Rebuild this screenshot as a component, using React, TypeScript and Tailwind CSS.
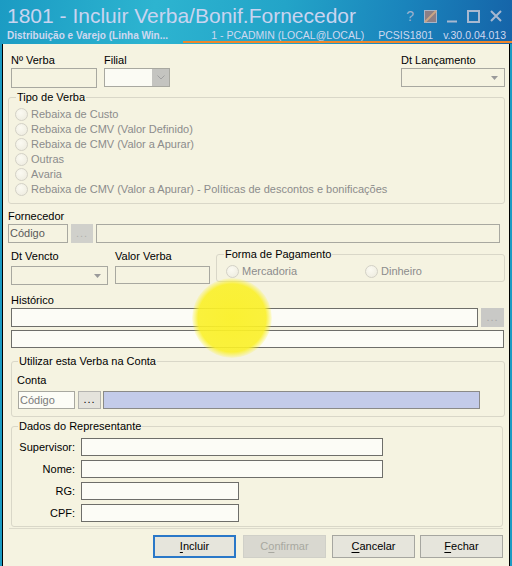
import React from "react";

const Lbl = ({ children, className = "" }: { children: React.ReactNode; className?: string }) => (
  <div className={`h-[13px] leading-[13px] whitespace-nowrap ${className}`}>{children}</div>
);

const Radio = ({ label, className = "" }: { label: string; className?: string }) => (
  <div className={`flex h-[15px] items-center ${className}`}>
    <span className="h-[13px] w-[13px] rounded-full border border-[#d3d1c6] bg-[radial-gradient(circle_at_40%_35%,#fbfaf2,#ecEadd)]" />
    <span className="ml-[3px] leading-[13px] text-[#8c8c8c] whitespace-nowrap">{label}</span>
  </div>
);

const Arrow = ({ color = "#9a9a9a" }: { color?: string }) => (
  <svg width="7" height="4" viewBox="0 0 7 4">
    <path d="M0 0h7L3.5 4z" fill={color} />
  </svg>
);

const Dots = ({ color }: { color: string }) => (
  <span className={`text-[11px] leading-none tracking-[1px] ${color}`}>...</span>
);

const Group = ({
  title,
  className = "",
  children,
}: {
  title: string;
  className?: string;
  children: React.ReactNode;
}) => (
  <fieldset className={`rounded-[3px] border border-[#d9d7c8] ${className}`}>
    <legend className="ml-[1px] px-[1px] leading-[13px] whitespace-nowrap">{title}</legend>
    {children}
  </fieldset>
);

const Btn = ({
  mn,
  rest,
  pre = "",
  className = "",
  disabled = false,
}: {
  mn: string;
  rest: string;
  pre?: string;
  className?: string;
  disabled?: boolean;
}) => (
  <div
    className={`flex h-[23px] w-[83px] items-center justify-center ${
      disabled ? "border border-[#d0d0c8] bg-[#d9d8d0] text-[#a8a8a0]" : "border border-[#a6a6a0] bg-[#e6e5dc]"
    } ${className}`}
  >
    {pre}
    <span className="underline underline-offset-2">{mn}</span>
    {rest}
  </div>
);

function TitleBar() {
  return (
    <div className="h-[44px] shrink-0 bg-[linear-gradient(100deg,#1b9bc3_0%,#2db4d0_30%,#23a4c8_55%,#1a84bc_78%,#1563a8_100%)]">
      <div className="flex h-[30px] items-center">
        <div className="pl-[7px] pt-[2px] text-[21px] leading-[26px] text-[#c9d4f0] whitespace-nowrap">
          1801 - Incluir Verba/Bonif.Fornecedor
        </div>
        <div className="ml-auto mr-[10px] flex items-center gap-[10px] pt-[2px] text-[#9fb3cf]">
          <span className="text-[14px] leading-none">?</span>
          <svg width="13" height="13" viewBox="0 0 13 13">
            <rect x="0.5" y="0.5" width="12" height="12" fill="#8d7f86" stroke="#a8b4c8" />
            <path d="M1 12L12 1" stroke="#c9a585" strokeWidth="2" />
          </svg>
          <svg width="10" height="13" viewBox="0 0 10 13">
            <path d="M0 11.5h10" stroke="#a8b8d0" strokeWidth="2" />
          </svg>
          <svg width="13" height="13" viewBox="0 0 13 13">
            <rect x="1" y="1" width="11" height="11" fill="none" stroke="#a8b8d0" strokeWidth="2" />
          </svg>
          <svg width="12" height="12" viewBox="0 0 12 12">
            <path d="M1 1l10 10M11 1L1 11" stroke="#a8b8d0" strokeWidth="2" />
          </svg>
        </div>
      </div>
      <div className="flex h-[13px]">
        <div className="w-[190px] pl-[7px] text-[10px] font-bold leading-[11px] text-[#cfd8f0] whitespace-nowrap">
          Distribuição e Varejo (Linha Win...
        </div>
        <div className="flex flex-1 justify-end border-b-2 border-[#f0862a] pr-[6px] text-[10.5px] leading-[11px] text-[#cfd8f0] whitespace-nowrap">
          <span className="ml-[28px]">1 - PCADMIN (LOCAL@LOCAL)</span>
          <span className="ml-[14px]">PCSIS1801</span>
          <span className="ml-[10px]">v.30.0.04.013</span>
        </div>
      </div>
    </div>
  );
}

export default function App() {
  return (
    <div className="relative flex h-[566px] w-[512px] flex-col overflow-hidden bg-[#1b9bc3] font-['Liberation_Sans',Arial,sans-serif] text-[11px] text-black">
      <TitleBar />
      <div className="mx-[2px] flex flex-1 flex-col border-x border-black bg-[#f5f3e1]">
        {/* top row */}
        <div className="flex pt-[10px]">
          <div className="ml-[8px] w-[86px]">
            <Lbl>Nº Verba</Lbl>
            <div className="mt-[1px] h-[20px] border border-[#a8a8a0]" />
          </div>
          <div className="ml-[7px] w-[66px]">
            <Lbl>Filial</Lbl>
            <div className="mt-[1px] flex h-[19px] border border-[#a8a8a0] bg-[#fbfbf4]">
              <div className="flex-1" />
              <div className="flex w-[17px] items-center justify-center bg-[#c4c4c0]">
                <svg width="8" height="5" viewBox="0 0 8 5">
                  <path d="M0.5 0.5L4 4L7.5 0.5" fill="none" stroke="#a0a0a0" />
                </svg>
              </div>
            </div>
          </div>
          <div className="ml-auto mr-[4px] w-[104px]">
            <Lbl>Dt Lançamento</Lbl>
            <div className="mt-[1px] flex h-[19px] items-center justify-end border border-[#a8a8a0] pr-[6px]">
              <Arrow />
            </div>
          </div>
        </div>

        {/* Tipo de Verba */}
        <Group title="Tipo de Verba" className="ml-[5px] mr-[4px] mt-[3px] px-[6px] pb-[6px] pt-[3px]">
          <Radio label="Rebaixa de Custo" />
          <Radio label="Rebaixa de CMV (Valor Definido)" />
          <Radio label="Rebaixa de CMV (Valor a Apurar)" />
          <Radio label="Outras" />
          <Radio label="Avaria" />
          <Radio label="Rebaixa de CMV (Valor a Apurar) - Políticas de descontos e bonificações" />
        </Group>

        {/* Fornecedor */}
        <div className="ml-[5px] mt-[6px]">
          <Lbl>Fornecedor</Lbl>
          <div className="mt-[1px] flex h-[19px]">
            <div className="flex w-[60px] items-center border border-[#a8a8a0] pl-[1px] text-[#5a5a5a]">Código</div>
            <div className="ml-[3px] flex w-[22px] items-end justify-center bg-[#d0d0cb] pb-[4px]">
              <Dots color="text-[#b0b0ac]" />
            </div>
            <div className="ml-[3px] w-[404px] border border-[#a8a8a0]" />
          </div>
        </div>

        {/* Dt Vencto / Valor / Forma */}
        <div className="mt-[5px] flex items-start">
          <div className="ml-[8px] w-[97px] pt-[2px]">
            <Lbl>Dt Vencto</Lbl>
            <div className="mt-[3px] flex h-[19px] items-center justify-end border border-[#a8a8a0] pr-[6px]">
              <Arrow />
            </div>
          </div>
          <div className="ml-[7px] w-[95px] pt-[2px]">
            <Lbl>Valor Verba</Lbl>
            <div className="mt-[3px] h-[18px] border border-[#a8a8a0]" />
          </div>
          <Group title="Forma de Pagamento" className="ml-[6px] w-[289px] px-[6px] pb-[2px] pt-[3px]">
            <div className="flex">
              <Radio label="Mercadoria" className="ml-[3px] w-[139px]" />
              <Radio label="Dinheiro" />
            </div>
          </Group>
        </div>

        {/* Histórico */}
        <div className="ml-[8px] mt-[9px]">
          <Lbl>Histórico</Lbl>
          <div className="mt-[1px] flex h-[19px]">
            <div className="w-[467px] border border-[#6e6e6a] bg-[#fcfcf6]" />
            <div className="ml-[3px] flex w-[23px] items-end justify-center bg-[#c9c9c6] pb-[4px]">
              <Dots color="text-[#a6a6a4]" />
            </div>
          </div>
          <div className="mt-[3px] h-[18px] w-[493px] border border-[#6e6e6a] bg-[#fcfcf6]" />
        </div>

        {/* Conta */}
        <Group title="Utilizar esta Verba na Conta" className="ml-[8px] mr-[4px] mt-[7px] px-[5px] pb-[7px]">
          <Lbl className="mt-[6px]">Conta</Lbl>
          <div className="mt-[4px] flex h-[18px]">
            <div className="ml-[1px] flex w-[57px] items-center border border-[#a8a8a0] bg-[#fcfcf6] pl-[1px] text-[#7a7a7a]">
              Código
            </div>
            <div className="ml-[3px] flex w-[23px] items-end justify-center border border-[#b4b4b0] bg-[#e4e3dc] pb-[3px]">
              <Dots color="text-black" />
            </div>
            <div className="ml-[2px] w-[377px] border border-[#8a8a88] bg-[#c3cbe9]" />
          </div>
        </Group>

        {/* Representante */}
        <Group title="Dados do Representante" className="ml-[8px] mr-[6px] mt-[3px] px-[5px] pb-[4px] pt-[5px]">
          <div className="flex flex-col gap-[4px]">
            {[
              ["Supervisor:", "w-[302px]"],
              ["Nome:", "w-[302px]"],
              ["RG:", "w-[158px]"],
              ["CPF:", "w-[158px]"],
            ].map(([l, w]) => (
              <div key={l} className="flex h-[18px] items-center">
                <div className="w-[58px] text-right">{l}</div>
                <div className={`ml-[6px] h-[18px] border border-[#6e6e6a] bg-[#fcfcf6] ${w}`} />
              </div>
            ))}
          </div>
        </Group>

        <div className="mx-[6px] mt-[1px] border-t border-[#dcdacb]" />

        {/* buttons */}
        <div className="mt-[6px] flex">
          <Btn mn="I" rest="ncluir" className="ml-[150px] !border-2 !border-[#2a78c8]" />
          <Btn pre="C" mn="o" rest="nfirmar" disabled className="ml-[7px]" />
          <Btn mn="C" rest="ancelar" className="ml-[6px]" />
          <Btn mn="F" rest="echar" className="ml-[5px]" />
        </div>
      </div>

      {/* yellow cursor highlight */}
      <div className="pointer-events-none absolute left-[192px] top-[278px] h-[80px] w-[80px] rounded-full bg-[radial-gradient(circle,rgba(250,240,40,0.95)_0%,rgba(250,240,40,0.9)_60%,rgba(250,240,40,0)_72%)]" />
    </div>
  );
}
